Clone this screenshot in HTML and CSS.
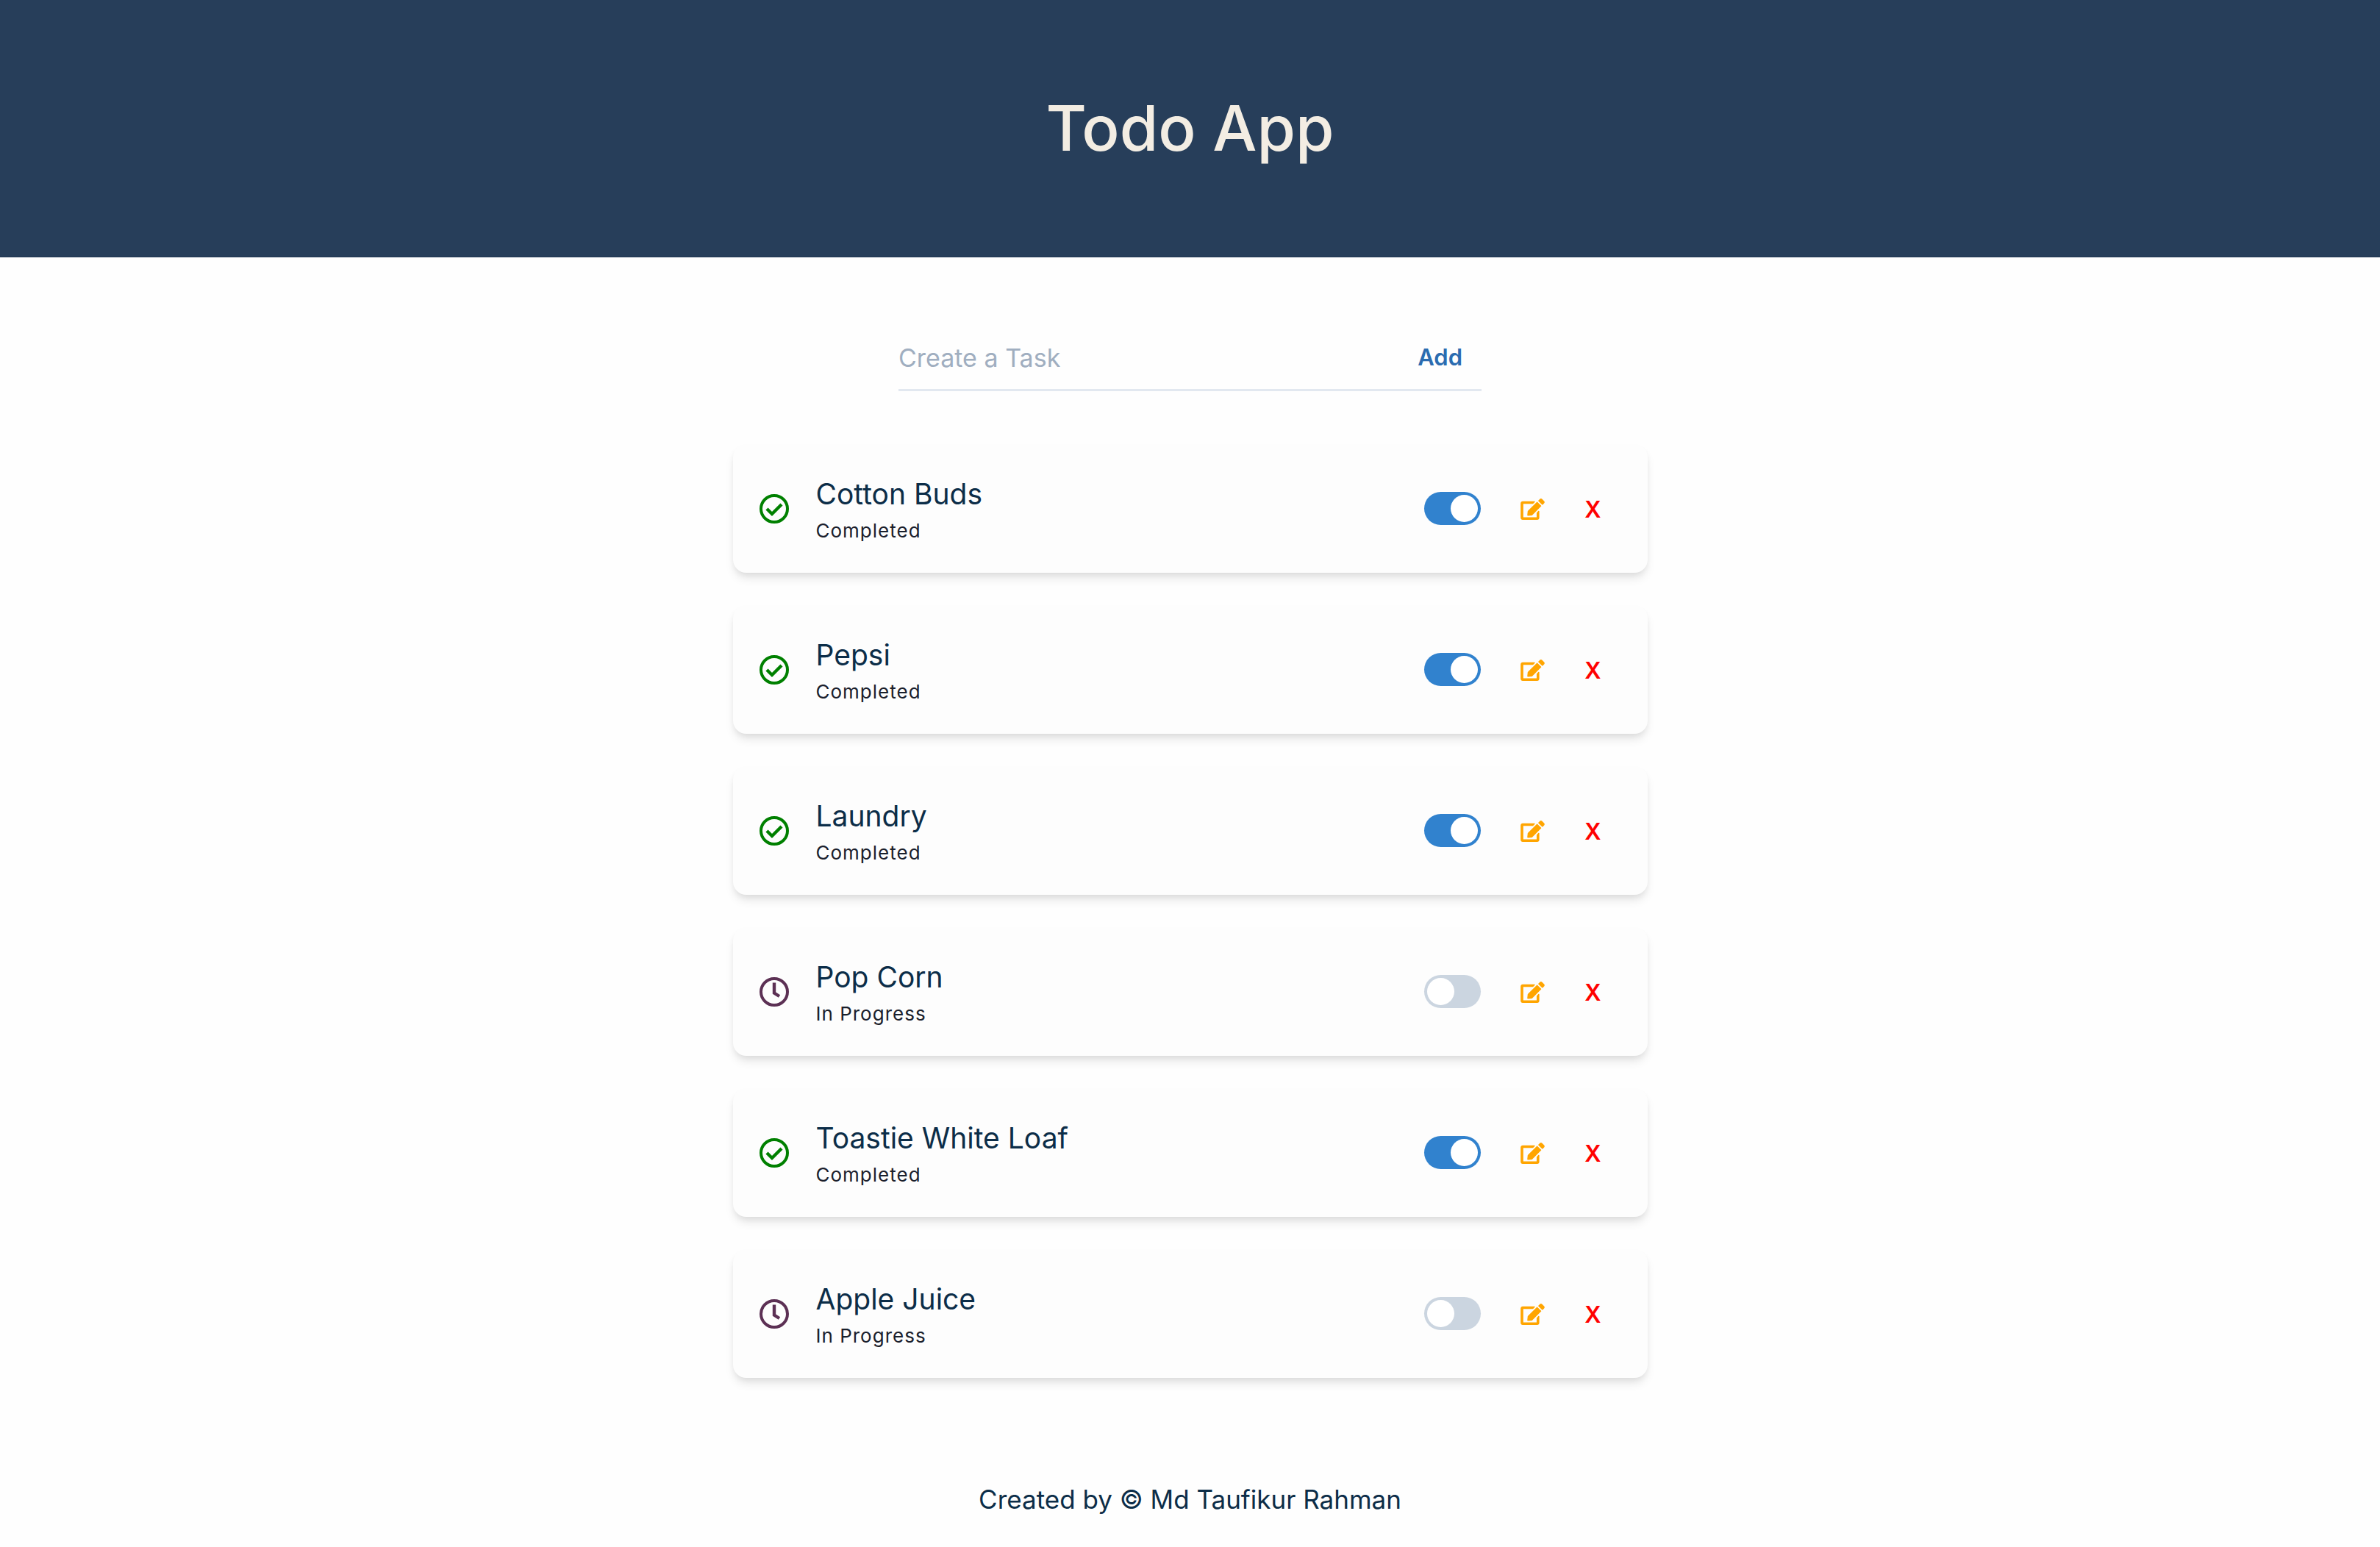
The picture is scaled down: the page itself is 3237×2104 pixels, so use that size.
FILE: index.html
```html
<!DOCTYPE html>
<html lang="en">
<head>
<meta charset="utf-8">
<title>Todo App</title>
<link rel="stylesheet" href="styles.css">
</head>
<body>
<svg class="icon-defs" aria-hidden="true">
  <symbol id="done" viewBox="0 0 40 40">
    <circle cx="20" cy="20" r="18" fill="none" stroke="currentColor" stroke-width="4"/>
    <path d="M10 20l7 7L30 14" fill="none" stroke="currentColor" stroke-width="4.4"/>
  </symbol>
  <symbol id="clock" viewBox="0 0 40 40">
    <circle cx="20" cy="20" r="18" fill="none" stroke="currentColor" stroke-width="4"/>
    <path d="M20 7.500V21.500L27 26" fill="none" stroke="currentColor" stroke-width="4.4"/>
  </symbol>
  <symbol id="edit" viewBox="0 0 576 512">
    <path fill="currentColor" d="M402.6 83.2l90.2 90.2c3.8 3.8 3.8 10 0 13.8L274.4 405.6l-92.8 10.3c-12.4 1.4-22.900-9.1-21.5-21.5l10.3-92.8L388.8 83.2c3.8-3.8 10-3.8 13.8 0zm162-22.900l-48.8-48.8c-15.2-15.2-39.900-15.2-55.2 0l-35.4 35.4c-3.8 3.8-3.8 10 0 13.8l90.2 90.2c3.8 3.8 10 3.8 13.8 0l35.4-35.4c15.2-15.3 15.2-40 0-55.2zM384 346.2V448H64V128h229.8c3.2 0 6.2-1.3 8.5-3.5l40-40c7.6-7.6 2.2-20.5-8.5-20.5H48C21.5 64 0 85.5 0 112v352c0 26.5 21.5 48 48 48h352c26.5 0 48-21.5 48-48V306.2c0-10.7-12.900-16-20.5-8.5l-40 40c-2.2 2.3-3.5 5.3-3.5 8.5z"/>
  </symbol>
</svg>
<header class="banner"><h1 class="banner-title">Todo App</h1></header>
<main class="content">
  <form class="task-form">
    <input class="task-input" type="text" placeholder="Create a Task" aria-label="Create a Task">
    <button class="add-button" type="button">Add</button>
  </form>
  <ul class="tasks">
    <li class="task">
      <svg class="status-icon done" aria-hidden="true"><use href="#done"/></svg>
      <div class="task-text"><h2 class="task-name">Cotton Buds</h2><p class="task-status">Completed</p></div>
      <input class="toggle" type="checkbox" aria-label="Cotton Buds completed" checked>
      <button class="edit-button" type="button" aria-label="Edit Cotton Buds"><svg class="edit-icon"><use href="#edit"/></svg></button>
      <button class="delete-button" type="button" aria-label="Delete Cotton Buds">X</button>
    </li>
    <li class="task">
      <svg class="status-icon done" aria-hidden="true"><use href="#done"/></svg>
      <div class="task-text"><h2 class="task-name">Pepsi</h2><p class="task-status">Completed</p></div>
      <input class="toggle" type="checkbox" aria-label="Pepsi completed" checked>
      <button class="edit-button" type="button" aria-label="Edit Pepsi"><svg class="edit-icon"><use href="#edit"/></svg></button>
      <button class="delete-button" type="button" aria-label="Delete Pepsi">X</button>
    </li>
    <li class="task">
      <svg class="status-icon done" aria-hidden="true"><use href="#done"/></svg>
      <div class="task-text"><h2 class="task-name">Laundry</h2><p class="task-status">Completed</p></div>
      <input class="toggle" type="checkbox" aria-label="Laundry completed" checked>
      <button class="edit-button" type="button" aria-label="Edit Laundry"><svg class="edit-icon"><use href="#edit"/></svg></button>
      <button class="delete-button" type="button" aria-label="Delete Laundry">X</button>
    </li>
    <li class="task">
      <svg class="status-icon pending" aria-hidden="true"><use href="#clock"/></svg>
      <div class="task-text"><h2 class="task-name">Pop Corn</h2><p class="task-status">In Progress</p></div>
      <input class="toggle" type="checkbox" aria-label="Pop Corn completed">
      <button class="edit-button" type="button" aria-label="Edit Pop Corn"><svg class="edit-icon"><use href="#edit"/></svg></button>
      <button class="delete-button" type="button" aria-label="Delete Pop Corn">X</button>
    </li>
    <li class="task">
      <svg class="status-icon done" aria-hidden="true"><use href="#done"/></svg>
      <div class="task-text"><h2 class="task-name">Toastie White Loaf</h2><p class="task-status">Completed</p></div>
      <input class="toggle" type="checkbox" aria-label="Toastie White Loaf completed" checked>
      <button class="edit-button" type="button" aria-label="Edit Toastie White Loaf"><svg class="edit-icon"><use href="#edit"/></svg></button>
      <button class="delete-button" type="button" aria-label="Delete Toastie White Loaf">X</button>
    </li>
    <li class="task">
      <svg class="status-icon pending" aria-hidden="true"><use href="#clock"/></svg>
      <div class="task-text"><h2 class="task-name">Apple Juice</h2><p class="task-status">In Progress</p></div>
      <input class="toggle" type="checkbox" aria-label="Apple Juice completed">
      <button class="edit-button" type="button" aria-label="Edit Apple Juice"><svg class="edit-icon"><use href="#edit"/></svg></button>
      <button class="delete-button" type="button" aria-label="Delete Apple Juice">X</button>
    </li>
  </ul>
</main>
<footer class="footer">Created by © Md Taufikur Rahman</footer>
</body>
</html>
```
FILE: styles.css
```css
* { box-sizing: border-box; }

body {
  margin: 0;
  background: #fefefe;
  color: #0c2d48;
  font-family: Inter, "Liberation Sans", sans-serif;
}

h1, h2, p, ul { margin: 0; padding: 0; font-weight: 400; }

button {
  padding: 0;
  border: 0;
  background: none;
  font: inherit;
  cursor: pointer;
}

.icon-defs { display: none; }

.banner {
  padding: 112px 32px;
  background: #273e5a;
  border-bottom: 1px solid #1f3552;
  text-align: center;
}

.banner-title {
  color: #f3ede3;
  font-size: 85px;
  font-weight: 500;
  line-height: 125px;
}

.content {
  display: flex;
  flex-direction: column;
  align-items: center;
  gap: 72px;
  padding: 92px 32px 0;
}

.task-form {
  display: flex;
  width: 100%;
  max-width: 793px;
  border-bottom: 3px solid #e2e8f0;
}

.task-input {
  flex: 1;
  min-width: 0;
  height: 87px;
  padding: 2px 0 0;
  border: 0;
  outline: 0;
  background: none;
  color: #0c2d48;
  font: inherit;
  font-size: 34px;
}

.task-input::placeholder { color: #a0aec0; opacity: 1; }

.add-button {
  padding: 0 26px;
  color: #2b6cb0;
  font-size: 31px;
  font-weight: 600;
}

.tasks {
  display: grid;
  gap: 44px;
  width: 100%;
  max-width: 1244px;
  list-style: none;
}

.task {
  display: flex;
  align-items: center;
  padding: 38px 63px 37px 36px;
  border-radius: 18px;
  background: #fdfdfd;
  box-shadow: 0 9px 13px -2px rgba(0, 0, 0, .1), 0 4px 9px -2px rgba(0, 0, 0, .06);
}

.status-icon {
  flex: none;
  width: 40px;
  height: 40px;
  margin-right: 37px;
}

.done { color: #008000; }
.pending { color: #5c3054; }

.task-text { flex: 1; }

.task-name { font-size: 39px; line-height: 60px; }

.task-status {
  color: #1a202c;
  font-size: 26px;
  line-height: 40px;
  letter-spacing: 1px;
}

.toggle {
  appearance: none;
  display: flex;
  width: 77px;
  height: 45px;
  margin: 0 54px 2px 0;
  padding: 4px;
  border-radius: 23px;
  background: #cbd5e0;
}

.toggle::before {
  content: "";
  width: 37px;
  height: 37px;
  border-radius: 50%;
  background: #fff;
}

.toggle:checked { justify-content: flex-end; background: #3182ce; }

.edit-button {
  display: flex;
  margin-right: 54px;
  color: #ffa500;
}

.edit-icon { width: 33px; height: 29px; }

.delete-button {
  color: #f00;
  font-size: 31px;
  font-weight: 600;
}

.footer {
  padding: 138px 32px 36px;
  font-size: 35px;
  line-height: 54px;
  text-align: center;
}
```
